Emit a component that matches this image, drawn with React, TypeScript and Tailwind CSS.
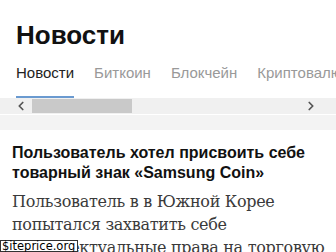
import { ChevronLeft, ChevronRight } from "lucide-react"

const tabs = ["Новости", "Биткоин", "Блокчейн", "Криптовалюты", "Майнинг"]

const bodyLines = [
    "Пользователь в в Южной Корее",
    "попытался захватить себе",
    "интеллектуальные права на торговую",
    "марку",
]

export default function App() {
    return (
        <div className="relative w-[336px] h-[252px] overflow-hidden bg-white font-['Liberation_Sans',Arial,sans-serif]">

            {/* Header */}
            <div className="pl-4 pt-5">
                <h1 className="text-[26px] leading-[30px] font-bold text-[#111]">Новости</h1>
            </div>

            {/* Tabs */}
            <div className="mt-[14px] pl-4 flex gap-5 whitespace-nowrap overflow-hidden">
                {tabs.map((tab, i) => (
                    <div
                        key={tab}
                        className={`text-[15px] leading-[18px] pb-[14px] border-b-2 ${i === 0 ? "text-[#222] border-[#6a9ad0]" : "text-[#999] border-transparent"}`}
                    >
                        {tab}
                    </div>
                ))}
            </div>

            {/* Scrollbar */}
            <div className="h-4 bg-[#f0f0f0] flex items-center px-4">
                <ChevronLeft size={14} strokeWidth={3} className="text-[#555] -ml-[2px]" />
                <div className="ml-[4px] w-[100px] h-[14px] bg-[#c9c9c9]" />
                <div className="flex-1" />
                <ChevronRight size={14} strokeWidth={3} className="text-[#555] mr-[2px]" />
            </div>
            <div className="h-4 bg-[#f3f3f3] border-t border-white" />

            {/* Article */}
            <div className="px-3 pt-[13px]">
                <h2 className="text-[16px] leading-[20px] font-bold text-[#111]">
                    Пользователь хотел присвоить себе товарный знак «Samsung Coin»
                </h2>
                <div className="mt-[7px] text-[16px] leading-[23px] text-[#3a3a3a] font-['DejaVu_Serif',serif]">
                    {bodyLines.map((line) => (
                        <p key={line} className="whitespace-nowrap tracking-[-0.3px]">{line}</p>
                    ))}
                </div>
            </div>

            {/* Watermark */}
            <div className="absolute left-0 bottom-0 h-3 bg-white border border-[#333] pl-[1px] pr-[2px] text-[11.5px] leading-[11px] text-black font-['DejaVu_Sans',sans-serif]">
                $iteprice.org
            </div>
        </div>
    )
}
